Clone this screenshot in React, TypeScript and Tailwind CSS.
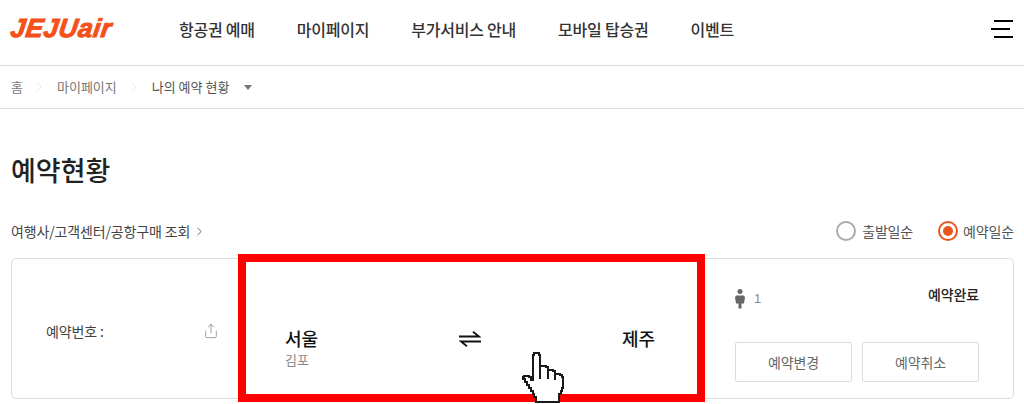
import { ChevronRight, Share } from 'lucide-react'

const KR = "font-['Noto_Sans_CJK_KR','Noto_Sans',sans-serif]"

const navItems = ['항공권 예매', '마이페이지', '부가서비스 안내', '모바일 탑승권', '이벤트']

const HandCursor = () => (
  <svg width="44" height="52" viewBox="0 0 44 52" shapeRendering="crispEdges" className="absolute left-[522px] top-[352px]">
    <path
      d="M11 3h1V1h5v2h1v11h6v1h2v3h5v1h2v3h5v1h2v2h1V36h-1v3h-1v3h-2v8H14v-5h-2v-3h-1v-3H9v-3H7v-3H5v-3H3v-3H1V25h1v-1h5v1h2v3h2V3z"
      fill="#fff"
      stroke="#1a1a1a"
      strokeWidth="2"
      strokeLinejoin="miter"
    />
    <path d="M18 14v13M26 18v9M33 22v6" stroke="#1a1a1a" strokeWidth="2" fill="none" />
  </svg>
)

const App = () => {
  return (
    <div className={`relative w-[1024px] h-[404px] overflow-hidden bg-white text-[#222] ${KR}`}>
      <header className="flex items-center h-[66px] border-b border-[#d9d9d9] pb-[8px]">
        <div className="w-[179px] pl-[11px]">
          <span className="inline-block -skew-x-[8deg] font-['Liberation_Sans',sans-serif] text-[26px] leading-none font-bold italic tracking-[0.6px] text-[#f4511a] [-webkit-text-stroke:1px_#f4511a]">
            JEJUair
          </span>
        </div>
        <nav className="flex gap-[42px] text-[16px] tracking-[-0.23px] font-medium text-[#333]">
          {navItems.map(item => (
            <a key={item} className="whitespace-nowrap">{item}</a>
          ))}
        </nav>
        <div className="ml-auto mr-[11px] flex flex-col items-end gap-[6px]">
          <span className="block h-[2px] w-[19px] bg-black"></span>
          <span className="block h-[2px] w-[19px] bg-black mr-[3px]"></span>
          <span className="block h-[2px] w-[19px] bg-black"></span>
        </div>
      </header>

      <div className="flex items-center h-[43px] border-b border-[#e0e0e0] pl-[11px] text-[13px] text-[#777]">
        <span>홈</span>
        <ChevronRight className="ml-[8px] mr-[10px] h-[16px] w-[16px] text-[#ddd]" strokeWidth={1} />
        <span>마이페이지</span>
        <ChevronRight className="ml-[9px] mr-[10px] h-[16px] w-[16px] text-[#ddd]" strokeWidth={1} />
        <span className="text-[#555]">나의 예약 현황</span>
        <span className="ml-[15px] h-0 w-0 border-x-[4px] border-t-[5px] border-x-transparent border-t-[#777]"></span>
      </div>

      <h1 className="mt-[42px] pl-[11px] text-[27px] leading-[38px] font-medium text-[#222]">예약현황</h1>

      <div className="mt-[30px] flex items-center justify-between h-[24px] pl-[11px] pr-[10px] text-[14px] tracking-[-0.15px] text-[#444]">
        <div className="flex items-center gap-[3px]">
          <span>여행사/고객센터/공항구매 조회</span>
          <ChevronRight className="h-[13px] w-[13px]" strokeWidth={1.5} />
        </div>
        <div className="flex items-center text-[#555]">
          <span className="h-[20px] w-[20px] rounded-full border-2 border-[#aaa]"></span>
          <span className="ml-[6px]">출발일순</span>
          <span className="ml-[25px] flex h-[20px] w-[20px] items-center justify-center rounded-full border-2 border-[#e8561f]">
            <span className="h-[10px] w-[10px] rounded-full bg-[#e8561f]"></span>
          </span>
          <span className="ml-[5px]">예약일순</span>
        </div>
      </div>

      <div className="ml-[11px] mr-[10px] mt-[15px] flex h-[141px] rounded-[5px] border border-[#ddd]">
        <div className="flex w-[226px] items-center pt-[5px] pl-[34px] pr-[19px] text-[14px] tracking-[-0.15px] text-[#444]">
          <span>예약번호 :</span>
          <Share className="ml-auto h-[16px] w-[16px] text-[#777]" strokeWidth={1} />
        </div>
        <div className="flex w-[497px] items-start justify-between pl-[47px] pr-[80px] pt-[66px]">
          <div>
            <div className="text-[18px] leading-[26px] font-medium text-[#111]">서울</div>
            <div className="text-[13px] leading-[18px] text-[#888]">김포</div>
          </div>
          <svg width="22" height="16" viewBox="0 0 22 16" className="mt-[6px] mr-[1px] text-[#111]" fill="none" stroke="currentColor" strokeWidth="1.8">
            <path d="M0 5.500h20L14 .8M22 10.500H2L8 15.200" />
          </svg>
          <div className="text-[18px] leading-[26px] font-medium text-[#111]">제주</div>
        </div>
        <div className="flex flex-1 flex-col pr-[34px]">
          <div className="flex items-start justify-between pt-[25px]">
            <div className="flex items-center gap-[9px] pt-[5px] text-[13px] text-[#888]">
              <svg width="10" height="20" viewBox="0 0 10 20" fill="#666">
                <circle cx="5" cy="2.5" r="2.5" />
                <path d="M1 6.5h8l1 2-1 6H6.500v5h-3v-5H1l-1-6z" />
              </svg>
              <span className="font-['Liberation_Sans',sans-serif]">1</span>
            </div>
            <span className="text-[14px] tracking-[-0.1px] font-medium text-[#222]">예약완료</span>
          </div>
          <div className="mt-[33px] flex justify-between text-[14px] tracking-[-0.1px] text-[#666]">
            <button className="h-[40px] w-[117px] rounded-[2px] border border-[#ddd]">예약변경</button>
            <button className="h-[40px] w-[117px] rounded-[2px] border border-[#ddd]">예약취소</button>
          </div>
        </div>
      </div>

      <div className="absolute left-[238px] top-[254px] h-[148px] w-[467px] border-8 border-[#ff0000]"></div>
      <HandCursor />
    </div>
  )
}

export default App
